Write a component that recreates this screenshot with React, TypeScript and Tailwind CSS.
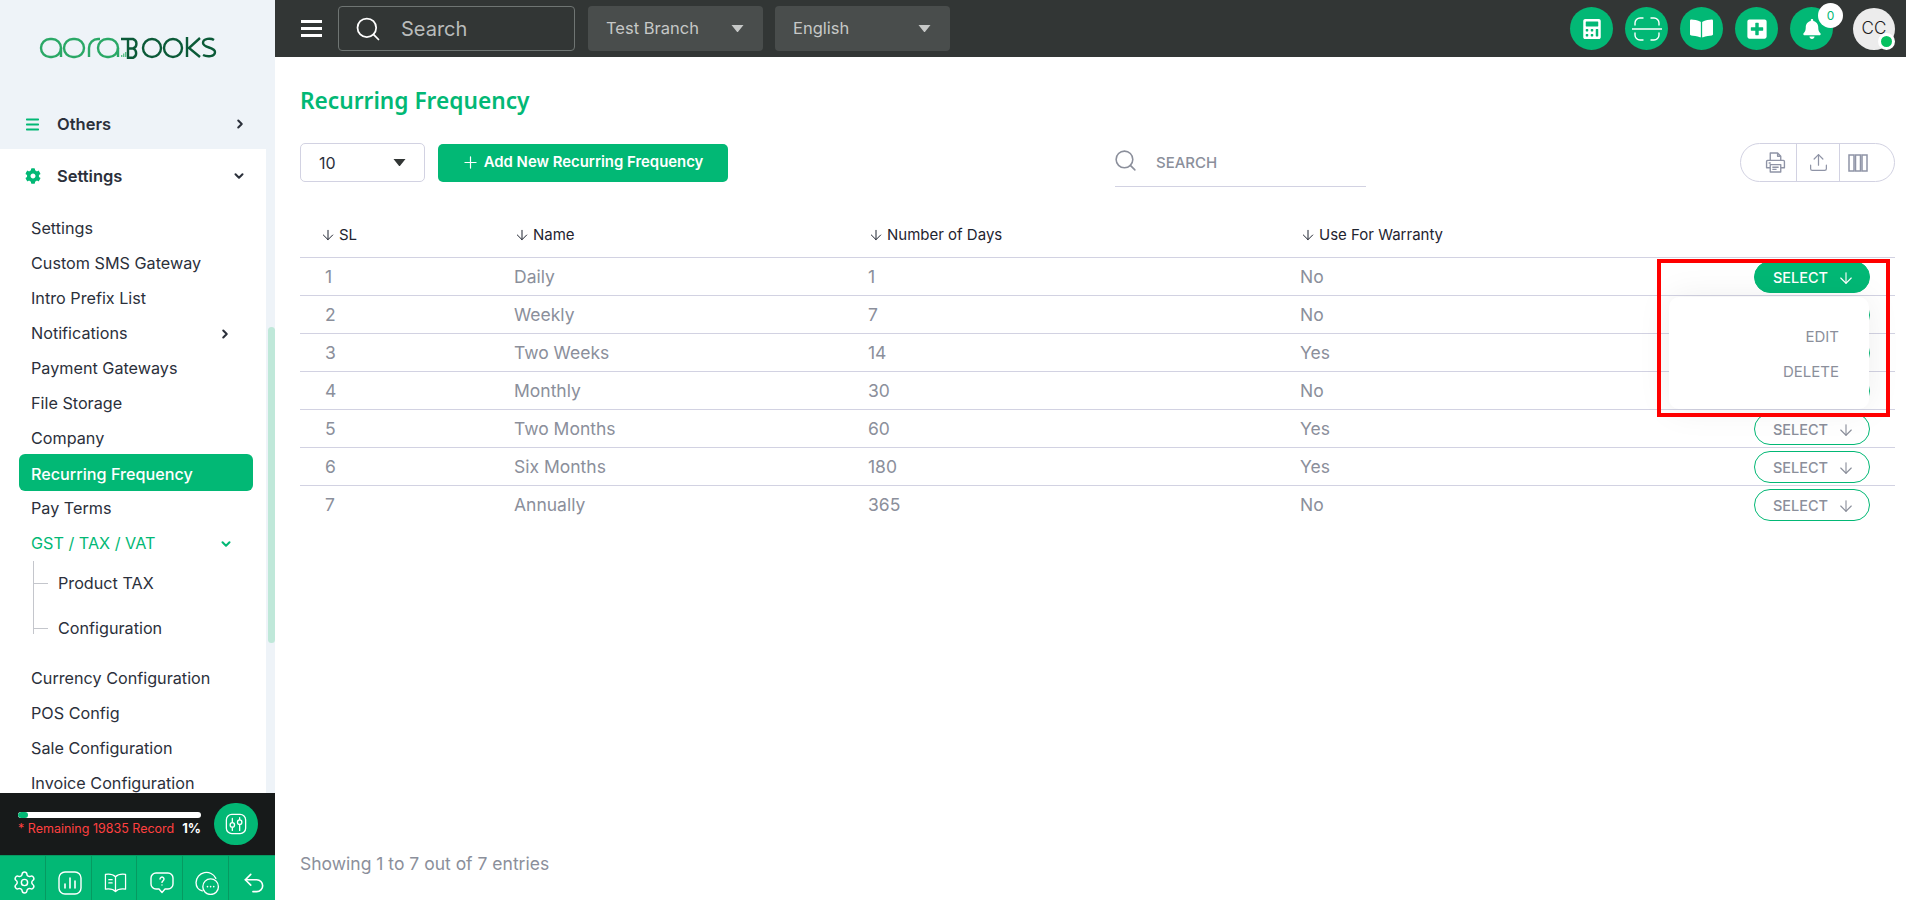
import { ArrowDown, ChevronDown, ChevronRight, Menu, Plus, Search, Upload, Settings as Gear, Undo2 } from "lucide-react";
import { FaBell, FaBookOpen, FaCalculator, FaCog, FaPlusSquare } from "react-icons/fa";

const font = { fontFamily: "Inter, 'Noto Sans', sans-serif" };

function Caret({ className }: { className: string }) {
  return (
    <svg viewBox="0 0 12 7" className={className} fill="currentColor">
      <path d="M0 0h12L6.8 6.4a1 1 0 0 1-1.6 0z" />
    </svg>
  );
}

function Logo() {
  const green = "#2aa866";
  const dark = "#0b5a38";
  const letterA = (cx: number) => (
    <g stroke={green} strokeWidth="2.4" fill="none">
      <rect x={cx - 10} y="39" width="20" height="18" rx="9" />
      <path d={`M${cx + 10} 48v9`} />
    </g>
  );
  return (
    <svg viewBox="0 0 190 30" className="w-[190px] h-[30px]" role="img" aria-label="aoraBOOKS">
      <g transform="translate(-37,-33)">
        {letterA(51)}
        <rect x="64" y="39" width="20" height="18" rx="9" stroke={green} strokeWidth="2.4" fill="none" />
        <path d="M89 57v-9a9 9 0 0 1 9-9h2" stroke={green} strokeWidth="2.4" fill="none" />
        {letterA(108)}
        <g fill="#5cc08a">
          <rect x="121" y="55" width="1.4" height="2" />
          <rect x="123" y="53.5" width="1.4" height="3.5" />
          <rect x="125" y="52" width="1.4" height="5" />
        </g>
        <g stroke={dark} strokeWidth="2.4" fill="none">
          <path d="M121 39h12a5 5 0 0 1 0 9.5a5 5 0 0 1 0 9.3h-5V39M128 48.500h5" />
          <rect x="143" y="39" width="18" height="18" rx="9" />
          <rect x="164" y="39" width="18" height="18" rx="9" />
          <path d="M187 37v20M200 38l-11 10l11 9" />
          <path d="M214 40c-3-2-11-2-11 3c0 5 12 4 12 9c0 5-8 5-12 3" />
        </g>
      </g>
    </svg>
  );
}

function ScanIcon() {
  return (
    <svg viewBox="0 0 30 24" className="w-[30px] h-[24px]" fill="none" stroke="white" strokeWidth="1.4" strokeLinecap="round">
      <path d="M3 8V6a5 5 0 0 1 5-5h3M19 1h3a5 5 0 0 1 5 5v2M3 16v2a5 5 0 0 0 5 5h3M19 23h3a5 5 0 0 0 5-5v-2" />
      <path d="M0.5 12h29" strokeWidth="1.6" />
    </svg>
  );
}

function IconCircle({ children }: { children: React.ReactNode }) {
  return <div className="w-[43px] h-[43px] rounded-full bg-[#02b875] flex items-center justify-center text-white relative">{children}</div>;
}

function NavItem({ label, active, chevron }: { label: string; active?: boolean; chevron?: boolean }) {
  return (
    <div
      className={`ml-[19px] mr-[13px] pl-[12px] pr-[22px] flex items-center justify-between text-[16.2px] rounded-[6px] ${
        active ? "h-[37px] -mt-[2px] pt-[3px] bg-[#02b875] text-white font-medium" : "h-[35px] text-[#2b303b]"
      }`}
    >
      <span className="whitespace-nowrap">{label}</span>
      {chevron && <ChevronRight size={14} strokeWidth={3.5} className="text-[#2b303b] -mr-[1px]" />}
    </div>
  );
}

function Sidebar() {
  return (
    <aside className="w-[275px] h-full bg-[#eef3f8] flex flex-col shrink-0 relative">
      <div className="h-[99px] pl-[37px] pt-[33px] shrink-0">
        <Logo />
      </div>
      <div className="h-[50px] shrink-0 flex items-center pl-[24px] pr-[28px] justify-between">
        <div className="flex items-center gap-[16px]">
          <Menu size={17} strokeWidth={2.6} className="text-[#02b875]" />
          <span className="text-[16.5px] font-semibold text-[#2b303b]">Others</span>
        </div>
        <ChevronRight size={14} strokeWidth={3.5} className="text-[#2b303b]" />
      </div>
      <div className="flex-1 min-h-0 overflow-hidden w-[266px] bg-white">
        <div className="h-[54px] flex items-center pl-[25px] pr-[20px] justify-between">
          <div className="flex items-center gap-[16px]">
            <FaCog size={16} className="text-[#02b875]" />
            <span className="text-[16.5px] font-semibold text-[#2b303b]">Settings</span>
          </div>
          <ChevronDown size={14} strokeWidth={3.5} className="text-[#2b303b]" />
        </div>
        <div className="h-[8px]" />
        <NavItem label="Settings" />
        <NavItem label="Custom SMS Gateway" />
        <NavItem label="Intro Prefix List" />
        <NavItem label="Notifications" chevron />
        <NavItem label="Payment Gateways" />
        <NavItem label="File Storage" />
        <NavItem label="Company" />
        <NavItem label="Recurring Frequency" active />
        <NavItem label="Pay Terms" />
        <div className="h-[35px] ml-[19px] mr-[13px] pl-[12px] pr-[20px] flex items-center justify-between text-[16.2px] text-[#02b875]">
          <span>GST / TAX / VAT</span>
          <ChevronDown size={14} strokeWidth={3.5} />
        </div>
        <div className="ml-[33px] h-[73px] border-l border-[#c4c6cc] mb-[27px] text-[16.2px] text-[#2b303b]">
          {["Product TAX", "Configuration"].map((t) => (
            <div key={t} className="h-[45px] flex items-center">
              <div className="w-[14px] h-px bg-[#c4c6cc] mr-[10px]" />
              <span>{t}</span>
            </div>
          ))}
        </div>
        <NavItem label="Currency Configuration" />
        <NavItem label="POS Config" />
        <NavItem label="Sale Configuration" />
        <NavItem label="Invoice Configuration" />
      </div>
      <div className="absolute left-[268px] top-[327px] w-[7px] h-[316px] rounded-full bg-[#bfe8d9]" />
      <div className="h-[62px] bg-[#171a1a] shrink-0 flex items-center pl-[18px] pr-[17px] justify-between">
        <div className="w-[183px]">
          <div className="h-[6px] rounded-full bg-white overflow-hidden">
            <div className="h-full w-[10px] rounded-full bg-[#02b875]" />
          </div>
          <div className="flex justify-between items-center mt-[2px] text-[12.5px] leading-[17px] whitespace-nowrap">
            <span className="text-[#ff4040]">* Remaining 19835 Record</span>
            <span className="text-white font-bold text-[13px]">1%</span>
          </div>
        </div>
        <div className="w-[44px] h-[42px] rounded-full bg-[#02b875] flex items-center justify-center">
          <svg viewBox="0 0 24 24" className="w-[22px] h-[22px]" fill="none" stroke="white" strokeWidth="1.4" strokeLinecap="round">
            <rect x="1.5" y="1.5" width="21" height="21" rx="6" />
            <path d="M8 6v4M8 16v3M16 5v2M16 13v6" />
            <circle cx="8" cy="13" r="2.4" />
            <circle cx="16" cy="10" r="2.4" />
          </svg>
        </div>
      </div>
      <div className="h-[45px] bg-[#02b875] border-t border-[#069a61] shrink-0 grid grid-cols-6 divide-x divide-[#069a61] text-white">
        <div className="flex items-center justify-center pt-[9px] pl-[4px]"><Gear size={25} strokeWidth={1.4} /></div>
        <div className="flex items-center justify-center pt-[9px] pl-[3px]">
          <svg viewBox="0 0 24 24" className="w-[24px] h-[24px]" fill="none" stroke="currentColor" strokeWidth="1.4" strokeLinecap="round">
            <rect x="1" y="1" width="22" height="22" rx="6" />
            <path d="M7 17v-4M12 17V7M17 17v-7" strokeWidth="1.6" />
          </svg>
        </div>
        <div className="flex items-center justify-center pt-[9px] pl-[3px]">
          <svg viewBox="0 0 24 24" className="w-[23px] h-[23px]" fill="none" stroke="currentColor" strokeWidth="1.3" strokeLinejoin="round" strokeLinecap="round">
            <path d="M12 6C9.5 3.5 5 3 1.5 3.5v15.5c3.5-.5 8-.2 10.500 2.500c2.500-2.700 7-3 10.500-2.500V3.500C19 3 14.500 3.500 12 6z" />
            <path d="M12 6v15M5 9h3.500M5 12.500h3.500" />
          </svg>
        </div>
        <div className="flex items-center justify-center pt-[9px] pl-[4px]">
          <svg viewBox="0 0 24 24" className="w-[24px] h-[24px]" fill="none" stroke="currentColor" strokeWidth="1.4" strokeLinecap="round" strokeLinejoin="round">
            <path d="M6 2h12a5 5 0 0 1 5 5v6a5 5 0 0 1-5 5h-3l-3 3.500L9 18H6a5 5 0 0 1-5-5V7a5 5 0 0 1 5-5z" />
            <path d="M10 8a2 2 0 1 1 3 1.800c-.7.400-1 .800-1 1.600M12 14v.100" />
          </svg>
        </div>
        <div className="flex items-center justify-center pt-[9px] pl-[4px]">
          <svg viewBox="0 0 24 24" className="w-[25px] h-[25px]" fill="none" stroke="currentColor" strokeWidth="1.3" strokeLinecap="round" strokeLinejoin="round">
            <path d="M7 20c-4-1-6-4-6-8a10 10 0 0 1 19-4" />
            <circle cx="15" cy="16" r="7.500" />
            <path d="M12 16v.100M15 16v.100M18 16v.100" strokeWidth="1.6" />
          </svg>
        </div>
        <div className="flex items-center justify-center pt-[9px] pl-[3px]"><Undo2 size={26} strokeWidth={1.5} /></div>
      </div>
    </aside>
  );
}

function TopBar() {
  return (
    <header className="h-[57px] shrink-0 bg-[#323635] flex items-center pl-[26px] pr-[11px]">
      <div className="w-[21px] flex flex-col gap-[4px]">
        <div className="h-[3px] bg-white" />
        <div className="h-[3px] bg-white" />
        <div className="h-[3px] bg-white" />
      </div>
      <div className="ml-[16px] w-[237px] h-[45px] rounded-[4px] border border-[#6f7573] flex items-center pl-[15px] gap-[19px]">
        <Search size={28} strokeWidth={1.5} className="text-white" />
        <span className="text-[#b9bcbb] text-[20px]">Search</span>
      </div>
      <div className="ml-[13px] w-[175px] h-[45px] rounded-[4px] bg-[#494d4c] flex items-center justify-between pl-[18px] pr-[19px]">
        <span className="text-[#c6c8c7] text-[16.5px]">Test Branch</span>
        <Caret className="w-[13px] h-[7px] text-[#c6c8c7]" />
      </div>
      <div className="ml-[12px] w-[175px] h-[45px] rounded-[4px] bg-[#494d4c] flex items-center justify-between pl-[18px] pr-[19px]">
        <span className="text-[#c6c8c7] text-[16.5px]">English</span>
        <Caret className="w-[13px] h-[7px] text-[#c6c8c7]" />
      </div>
      <div className="ml-auto flex items-center gap-[12px]">
        <IconCircle><FaCalculator size={20} /></IconCircle>
        <IconCircle><ScanIcon /></IconCircle>
        <IconCircle><FaBookOpen size={23} /></IconCircle>
        <IconCircle><FaPlusSquare size={22} /></IconCircle>
        <IconCircle>
          <FaBell size={20} />
          <span className="absolute -top-[4px] -right-[10px] w-[25px] h-[25px] rounded-full bg-white text-[#02b875] text-[12px] flex items-center justify-center">0</span>
        </IconCircle>
        <div className="ml-[8px] w-[42px] h-[42px] rounded-full bg-[#ececec] relative flex items-center justify-center text-[#1b1b1b] text-[17px] font-light">
          CC
          <span className="absolute right-0 bottom-0 w-[17px] h-[17px] rounded-full bg-[#07c160] border-[3px] border-white" />
        </div>
      </div>
    </header>
  );
}

const rows = [
  ["1", "Daily", "1", "No"],
  ["2", "Weekly", "7", "No"],
  ["3", "Two Weeks", "14", "Yes"],
  ["4", "Monthly", "30", "No"],
  ["5", "Two Months", "60", "Yes"],
  ["6", "Six Months", "180", "Yes"],
  ["7", "Annually", "365", "No"],
];

function Head({ children, className }: { children: string; className?: string }) {
  return (
    <div className={`flex items-center gap-[3px] pt-[3px] text-[15px] text-[#1f2430] font-normal ${className ?? ""}`}>
      <ArrowDown size={16} strokeWidth={1.5} />
      {children}
    </div>
  );
}

function SelectButton({ active }: { active?: boolean }) {
  return (
    <div
      className={`w-[116px] h-[32px] pt-[2px] pl-[4px] rounded-full border flex items-center justify-center gap-[9px] text-[14.5px] font-medium ${
        active ? "bg-[#02b875] border-[#02b875] text-white" : "border-[#02b875] text-[#8b8f9b] bg-white"
      }`}
    >
      SELECT
      <ArrowDown size={18} strokeWidth={1.5} />
    </div>
  );
}

const cols = "grid grid-cols-[214px_354px_432px_595px]";

function Table() {
  return (
    <div className="w-[1595px] mt-[28px]">
      <div className={`${cols} h-[48px] items-center border-b border-[#d2d2e2]`}>
        <Head className="pl-[20px]">SL</Head>
        <Head>Name</Head>
        <Head>Number of Days</Head>
        <Head>Use For Warranty</Head>
      </div>
      <div className="relative">
        {rows.map((r, i) => (
          <div key={r[0]} className={`${cols} h-[38px] items-center text-[17.5px] text-[#8b8f9b] ${i < 6 ? "border-b border-[#d2d2e2]" : ""}`}>
            <span className="pl-[25px] pt-[1px]">{r[0]}</span>
            <span className="pt-[1px]">{r[1]}</span>
            <span className="pt-[1px]">{r[2]}</span>
            <div className="flex items-center justify-between pr-[25px]">
              <span className="pt-[1px]">{r[3]}</span>
              <SelectButton active={i === 0} />
            </div>
          </div>
        ))}
        <div className="absolute right-[26px] top-[39px] w-[200px] h-[112px] rounded-[10px] bg-white shadow-[0_0_35px_rgba(0,0,0,0.07)] flex flex-col items-end pr-[30px] pt-[31px] gap-[17px] text-[15px] text-[#8b8f9b]">
          <span className="leading-[18px]">EDIT</span>
          <span className="leading-[18px]">DELETE</span>
        </div>
        <div className="absolute right-[5px] top-[1px] w-[233px] h-[158px] border-[4px] border-[#ff0000]" />
      </div>
    </div>
  );
}

export default function App() {
  return (
    <div className="w-full h-screen flex overflow-hidden bg-white" style={font}>
      <Sidebar />
      <main className="flex-1 min-w-0 flex flex-col">
        <TopBar />
        <div className="flex-1 min-h-0 flex flex-col pl-[25px] pr-[11px]">
          <h1 className="mt-[27px] text-[22.7px] leading-[34px] font-semibold text-[#02b875]" style={{ fontFamily: "'Noto Sans', sans-serif" }}>
            Recurring Frequency
          </h1>
          <div className="mt-[25px] h-[39px] flex items-center">
            <div className="w-[125px] h-[39px] rounded-[5px] border border-[#d2d2e2] flex items-center justify-between pl-[18px] pr-[18px] text-[16px] text-[#2b303b]">
              10
              <Caret className="w-[13px] h-[7px] text-[#323635]" />
            </div>
            <div className="ml-[13px] w-[290px] h-[38px] pr-[2px] rounded-[5px] bg-[#02b875] text-white text-[14.9px] font-semibold flex items-center justify-center gap-[4px]">
              <Plus size={19} strokeWidth={1.5} />
              Add New Recurring Frequency
            </div>
            <div className="ml-[387px] w-[251px] h-[45px] mt-[3px] border-b border-[#d2d2e2] flex items-start gap-[18px] text-[#8b8f9b]">
              <Search size={25} strokeWidth={1.5} className="mt-[6px] -ml-[2px]" />
              <span className="text-[15px] mt-[10px] font-medium">SEARCH</span>
            </div>
            <div className="ml-auto w-[155px] h-[39px] rounded-full border border-[#d2d2e2] flex text-[#8f94a6]">
              <div className="w-[56px] flex items-center justify-end pr-[10px] border-r border-[#d2d2e2]">
                <svg viewBox="0 0 20 20" className="w-[21px] h-[21px]" fill="none" stroke="currentColor" strokeWidth="1.3" strokeLinejoin="round">
                  <path d="M5 8V1h7l3 3v4" />
                  <path d="M12 1v3h3" />
                  <path d="M5 15H1.500V9a1 1 0 0 1 1-1h15a1 1 0 0 1 1 1v6H15" />
                  <rect x="5" y="12" width="10" height="7" />
                  <path d="M7 14.500h6M7 16.500h4M3.500 10.500h2" />
                </svg>
              </div>
              <div className="w-[43px] flex items-center justify-center border-r border-[#d2d2e2]"><Upload size={21} strokeWidth={1.4} /></div>
              <div className="flex-1 flex items-center pl-[8px]">
                <svg viewBox="0 0 20 18" className="w-[20px] h-[18px]" fill="none" stroke="currentColor" strokeWidth="1.5">
                  <rect x="1" y="1" width="5" height="16" />
                  <rect x="7.500" y="1" width="5" height="16" />
                  <rect x="14" y="1" width="5" height="16" />
                </svg>
              </div>
            </div>
          </div>
          <Table />
          <div className="mt-auto mb-[23px] text-[17.5px] text-[#8b8f9b]">Showing 1 to 7 out of 7 entries</div>
        </div>
      </main>
    </div>
  );
}
